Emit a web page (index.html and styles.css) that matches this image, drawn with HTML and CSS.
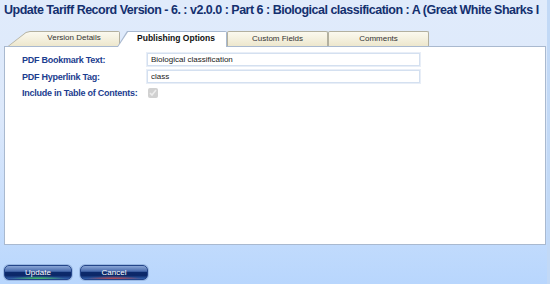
FILE: index.html
```html
<!DOCTYPE html>
<html lang="en">
<head>
  <meta charset="UTF-8" />
  <title>Update Tariff Record Version</title>
  <link rel="stylesheet" href="styles.css">
</head>
<body>
<div class="window">
  <h1 class="title">Update Tariff Record Version - 6. : v2.0.0 : Part 6 : Biological classification : A (Great White Sharks I</h1>

  <div class="tabs">
    <div class="tab tab-first"><span>Version Details</span></div>
    <div class="tab tab-active"><span>Publishing Options</span></div>
    <div class="tab"><span>Custom Fields</span></div>
    <div class="tab"><span>Comments</span></div>
  </div>

  <div class="panel">
    <form class="fields">
      <label for="bookmark">PDF Bookmark Text:</label>
      <input type="text" id="bookmark" value="Biological classification" />

      <label for="hyperlink">PDF Hyperlink Tag:</label>
      <input type="text" id="hyperlink" value="class" />

      <label for="toc">Include in Table of Contents:</label>
      <span class="check"><input type="checkbox" id="toc" checked disabled /></span>
    </form>
  </div>

  <div class="actions">
    <button class="btn btn-update">Update</button>
    <button class="btn btn-cancel">Cancel</button>
  </div>
</div>
</body>
</html>
```

FILE: styles.css
```css
html, body {
  margin: 0;
  height: 100%;
}
body {
  font-family: "Liberation Sans", Arial, sans-serif;
  background: linear-gradient(#e0ebfb, #dde9fb 40%, #b8d6fd);
  overflow: hidden;
}
.window {
  height: 284px;
  width: 547px;
  border-right: 3px solid #c2d9f6;
  display: flex;
  flex-direction: column;
}
.title {
  margin: 0;
  padding: 3px 0 0 4px;
  height: 25px;
  box-sizing: border-box;
  font-size: 12.5px;
  letter-spacing: -0.5px;
  font-weight: bold;
  color: #14306f;
  white-space: nowrap;
  overflow: hidden;
}
.tabs {
  display: flex;
  height: 15px;
  margin-top: 6px;
  padding-left: 8px;
}
.tab {
  position: relative;
  width: 101px;
  height: 15px;
  box-sizing: border-box;
  border: 1px solid #b3b09f;
  border-bottom: none;
  border-radius: 2px 2px 0 0;
  background: linear-gradient(#fbf9ef, #ede7cd);
  font-size: 8px;
  color: #333;
  text-align: center;
  line-height: 14px;
}
.tab-first {
  width: 112px;
  border: none;
  background: #b3b09f;
  clip-path: polygon(0 100%, 18px 1px, 22px 0, 100% 0, 100% 100%);
  z-index: 1;
}
.tab-first::before {
  content: "";
  position: absolute;
  inset: 1px 1px 0 1px;
  background: linear-gradient(#fbf9ef, #ede7cd);
  clip-path: polygon(0 100%, 17px 1px, 21px 0, 100% 0, 100% 100%);
}
.tab-first span {
  position: relative;
  padding-left: 20px;
}
.tab-active {
  width: 110px;
  margin-left: -3px;
  border: none;
  background: #a9b9cf;
  clip-path: polygon(0 100%, 10px 0, 100% 0, 100% 100%);
  font-size: 8.5px;
  font-weight: bold;
  color: #111;
  z-index: 3;
  height: 16px;
}
.tab-active::before {
  content: "";
  position: absolute;
  inset: 1px 1px 0 1px;
  background: #fff;
  clip-path: polygon(0 100%, 10px 0, 100% 0, 100% 100%);
}
.tab-active span {
  position: relative;
  padding-left: 8px;
}
.tabs .tab:nth-child(3) { z-index: 2; }
.panel {
  margin-left: 4px;
  width: 542px;
  height: 199px;
  box-sizing: border-box;
  background: #fff;
  border: 1px solid #a9b9cf;
  position: relative;
  z-index: 2;
}
.fields {
  display: grid;
  grid-template-columns: 124px 275px;
  row-gap: 2px;
  padding: 5px 0 0 17px;
  align-items: center;
}
.fields label {
  font-size: 9px;
  letter-spacing: -0.25px;
  font-weight: bold;
  color: #1c3d8f;
  white-space: nowrap;
}
.fields input[type="text"] {
  height: 15px;
  box-sizing: border-box;
  border: 2px solid #d4e0f0;
  outline: 1px solid #e8eef7;
  outline-offset: -1px;
  padding: 0 0 0 3px;
  font-family: "Liberation Sans", Arial, sans-serif;
  font-size: 8px;
  color: #222;
  margin: 0;
}
.check {
  height: 14px;
  display: flex;
  align-items: center;
  padding-left: 2px;
}
.check input {
  margin: 0;
  width: 10px;
  height: 10px;
}
.actions {
  display: flex;
  gap: 8px;
  padding: 20px 0 0 4px;
}
.btn {
  width: 68px;
  height: 15px;
  padding: 0;
  border: 1px solid #24458a;
  border-radius: 5px;
  box-shadow: 0 0 0 1px #9ab8e2;
  font-family: "Liberation Sans", Arial, sans-serif;
  font-size: 8px;
  color: #fff;
  cursor: pointer;
}
.btn-update {
  background: radial-gradient(ellipse 28px 3px at 50% 100%, #48c862, transparent),
    linear-gradient(#8aa6d6, #4a6cae 40%, #0c2a6c 50%, #0b2767 72%, #3462ad);
}
.btn-cancel {
  background: radial-gradient(ellipse 28px 3px at 50% 100%, #c84a4a, transparent),
    linear-gradient(#8aa6d6, #4a6cae 40%, #0c2a6c 50%, #0b2767 72%, #3462ad);
}
```
